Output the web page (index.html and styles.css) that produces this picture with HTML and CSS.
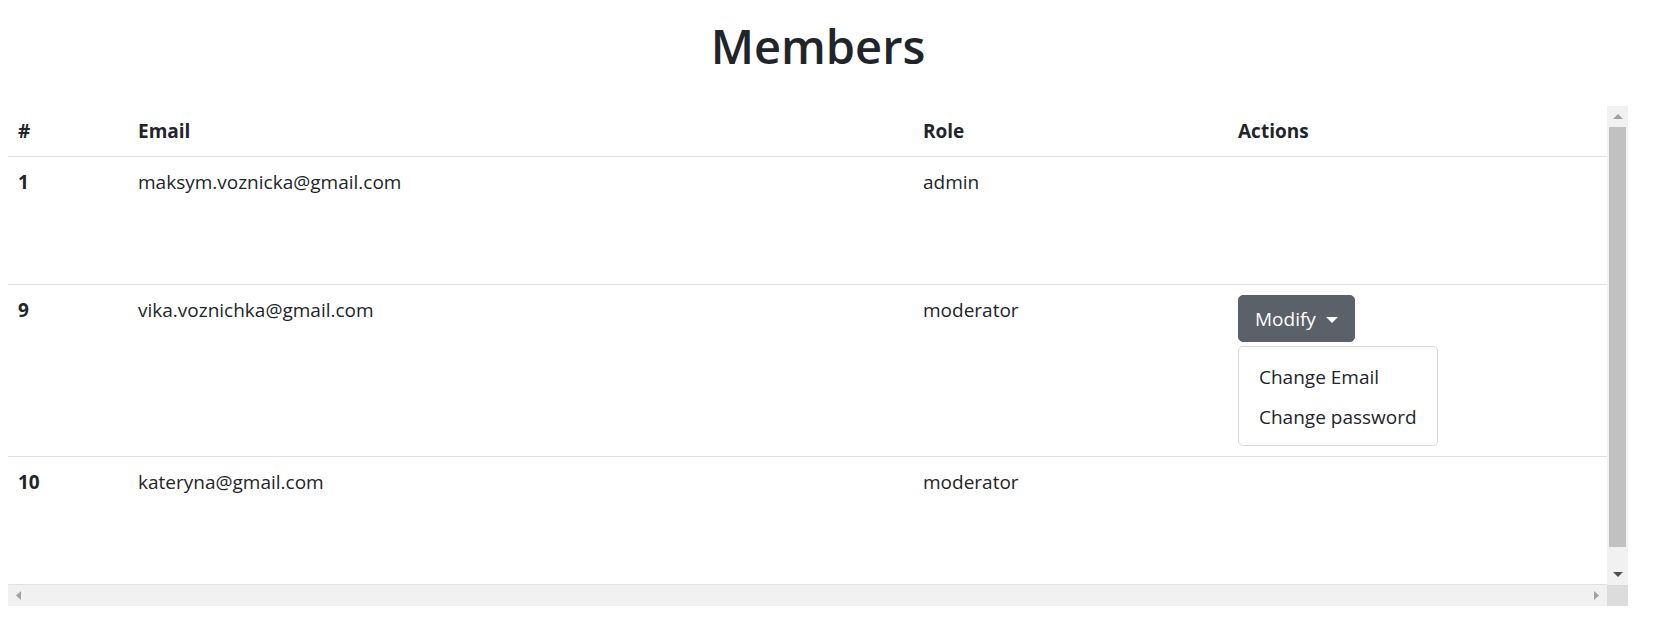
FILE: index.html
```html
<!DOCTYPE html>
<html lang="en">
<head>
<meta charset="utf-8">
<title>Members</title>
<link rel="stylesheet" href="styles.css">
</head>
<body>
<main class="page">
  <h1 class="title">Members</h1>
  <div class="scroller">
    <div class="viewport">
      <table class="members">
        <colgroup>
          <col class="col-id">
          <col class="col-email">
          <col class="col-role">
          <col class="col-actions">
        </colgroup>
        <thead>
          <tr>
            <th>#</th>
            <th>Email</th>
            <th>Role</th>
            <th>Actions</th>
          </tr>
        </thead>
        <tbody>
          <tr class="row-plain">
            <th class="num">1</th>
            <td>maksym.voznicka@gmail.com</td>
            <td>admin</td>
            <td></td>
          </tr>
          <tr>
            <th class="num">9</th>
            <td>vika.voznichka@gmail.com</td>
            <td>moderator</td>
            <td>
              <div class="dropdown">
                <button class="btn" type="button">Modify <span class="caret"></span></button>
                <ul class="menu">
                  <li class="menu-item">Change Email</li>
                  <li class="menu-item">Change password</li>
                </ul>
              </div>
            </td>
          </tr>
          <tr class="row-plain">
            <th class="num">10</th>
            <td>kateryna@gmail.com</td>
            <td>moderator</td>
            <td></td>
          </tr>
        </tbody>
      </table>
    </div>
    <div class="vbar">
      <div class="sb-btn">
        <svg width="10" height="5" viewBox="0 0 10 5"><polygon points="0,5 10,5 5,0" fill="#a3a3a3"/></svg>
      </div>
      <div class="vthumb"></div>
      <div class="sb-fill"></div>
      <div class="sb-btn">
        <svg width="10" height="5" viewBox="0 0 10 5"><polygon points="0,0 10,0 5,5" fill="#505050"/></svg>
      </div>
    </div>
    <div class="hbar">
      <div class="sb-btn">
        <svg width="5" height="9" viewBox="0 0 5 9"><polygon points="5,0 5,9 0,4.5" fill="#a3a3a3"/></svg>
      </div>
      <div class="sb-btn">
        <svg width="5" height="9" viewBox="0 0 5 9"><polygon points="0,0 0,9 5,4.5" fill="#a3a3a3"/></svg>
      </div>
    </div>
    <div class="corner"></div>
  </div>
</main>
</body>
</html>
```
FILE: styles.css
```css
* {
  box-sizing: border-box;
}

body {
  margin: 0;
  background: #fff;
  color: #212529;
  font-family: "Open Sans", "Noto Sans", sans-serif;
  font-size: 19px;
  line-height: 30px;
}

.page {
  width: 1620px;
  margin-left: 8px;
  padding-top: 16px;
}

.title {
  margin: 0 0 30px;
  font-size: 47px;
  line-height: 60px;
  font-weight: 600;
  text-align: center;
}

.scroller {
  display: grid;
  grid-template-columns: 1599px 21px;
  grid-template-rows: 479px 21px;
}

.viewport {
  overflow: hidden;
}

.members {
  width: 1599px;
  border-collapse: collapse;
  table-layout: fixed;
}

.col-id { width: 120px; }
.col-email { width: 785px; }
.col-role { width: 315px; }
.col-actions { width: 379px; }

.members th,
.members td {
  padding: 10px;
  text-align: left;
  vertical-align: top;
  border-bottom: 1px solid #dee2e6;
}

.members th {
  font-weight: 700;
}

.row-plain {
  height: 128px;
}

.dropdown {
  display: flex;
  flex-direction: column;
  align-items: flex-start;
}

.btn {
  font: inherit;
  line-height: 30px;
  color: #fff;
  background: #5a6168;
  border: 1px solid #5a6168;
  border-radius: 5px;
  padding: 7.5px 16px 7.5px 16px;
  display: flex;
  align-items: center;
}

.caret {
  display: inline-block;
  margin-left: 10px;
  margin-top: 3px;
  border-top: 6px solid #fff;
  border-left: 6px solid transparent;
  border-right: 6px solid transparent;
}

.menu {
  list-style: none;
  margin: 4px 0 0;
  padding: 10px 0 8px;
  width: 200px;
  border: 1px solid rgba(0, 0, 0, 0.15);
  border-radius: 5px;
  background: #fff;
}

.menu-item {
  padding: 5px 20px;
  color: #212529;
  white-space: nowrap;
}

.vbar {
  background: #f1f1f1;
  display: flex;
  flex-direction: column;
}

.sb-btn {
  width: 21px;
  height: 21px;
  display: flex;
  align-items: center;
  justify-content: center;
  flex: none;
}

.sb-btn svg {
  display: block;
}

.vthumb {
  height: 420px;
  margin: 0 2px;
  background: #c1c1c1;
  flex: none;
}

.sb-fill {
  flex: 1;
}

.hbar {
  background: #f1f1f1;
  display: flex;
  justify-content: space-between;
}

.corner {
  background: #dcdcdc;
}
```
